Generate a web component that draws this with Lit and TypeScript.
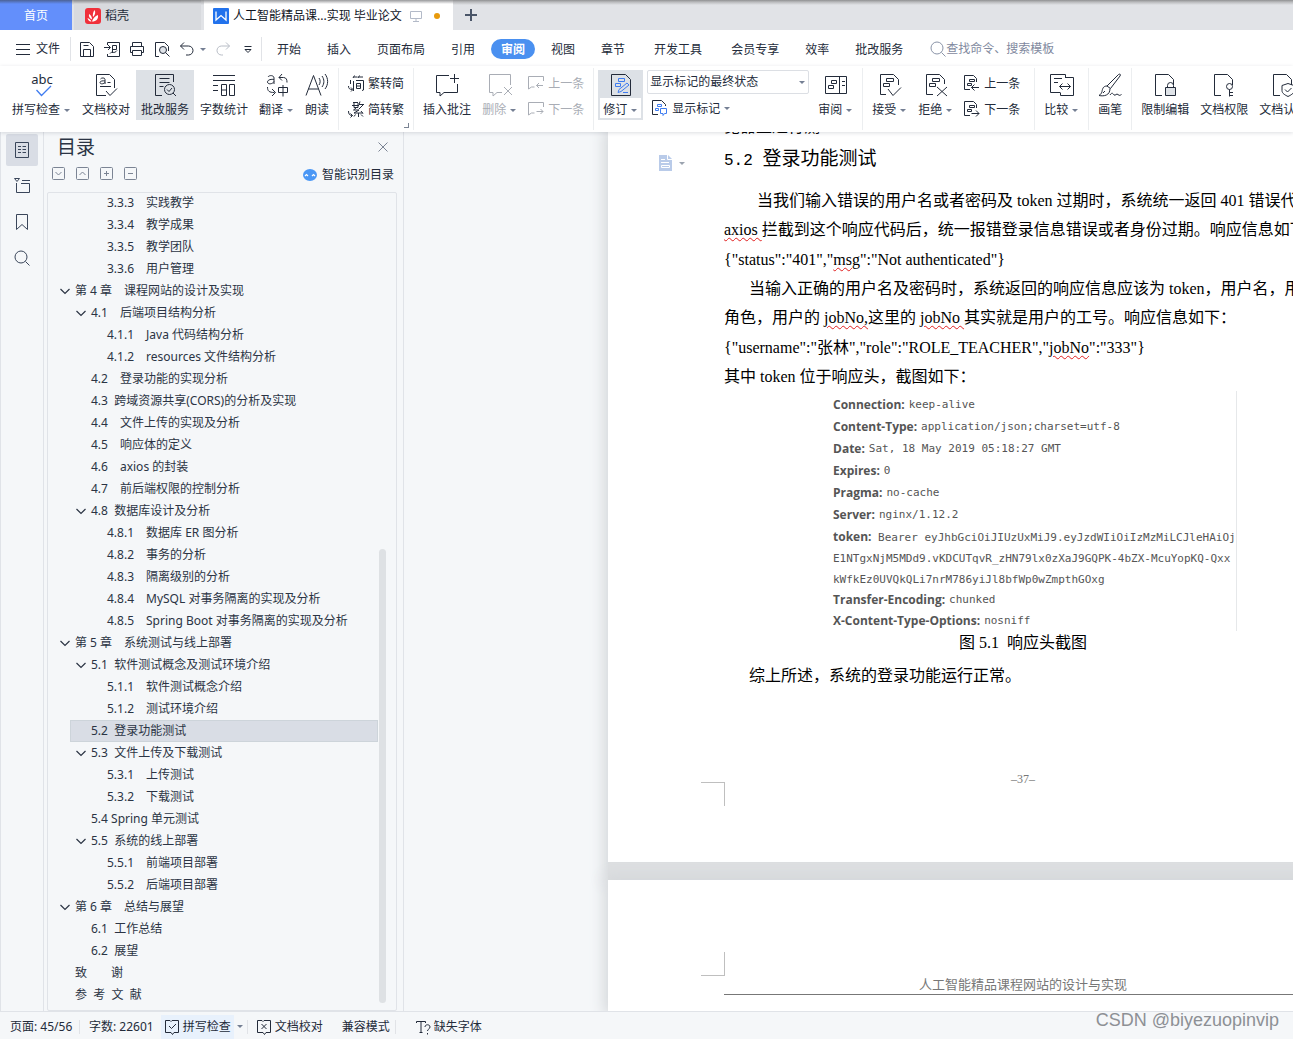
import { LitElement, html, svg, css, nothing, TemplateResult } from "lit";
import { customElement, property, state } from "lit/decorators.js";
import { classMap } from "lit/directives/class-map.js";

const doc = svg`<path d="M9 22.5H2.5v-21h13l5 5V12"/>`;
const lines2 = svg`<path d="M8.5 5.5h7v3h-7zM5.5 10.5h6v3h-6z"/>`;
const mini = svg`<path d="M5.5 4.5h5v2h-5zM3.5 8.5h4v2h-4z"/>`;

const ICONS: Record<string, TemplateResult> = {
  spell: svg`<text x="12" y="11" text-anchor="middle">abc</text><path class="blue" d="M6.500 17l5 5.500 9.500-9.500" stroke-width="1.300"/>`,
  proof: svg`<path d="M12 22.500H2.500v-21h13l5 5V15"/><path d="M6.500 6c1-1.500 4.500-1.500 4.500.500V11M11 8c-2-.500-5 0-5 1.500 0 2 4 1.600 5-.200M13.500 9.500h3M6 13.500h11M12 18l4 4.500 7-7"/>`,
  service: svg`<path d="M9 22.500H2.500v-21h18V9M6.500 5.500h10M6.500 9.500h10M6.500 13.500h4"/><circle cx="16.500" cy="16.500" r="5"/><path d="M14 16.500l2 2 3-3.500M20 20l3 3"/>`,
  count: svg`<path d="M1 2.500h22M1 7.500h22M1 12.500h5M1 17.500h5M9.500 11.500h5v11h-5zM9.500 17h5M17.500 11.500h5v11h-5z"/>`,
  translate: svg`<path d="M3 4c1-2 6-2 6 1v6M9 6.500C7 6 2.500 6.500 2.500 9s5 2.500 6.500-.500M17 1l-3 3.500 3 3M14 4.500h4.500c3 0 3.500 2.500 3.500 5M2.500 14c0 4 1.500 5.500 7 5.500M7 16l3.500 3.500L7 23M13.500 14.500h9v5h-9zM18 12v11.500"/>`,
  read: svg`<path d="M1 22.500L8.500 2.500 16 22.500M3.500 16h10M14 5c1.500 2 1.500 5 0 7M17 3c2.500 3.500 2.500 7.500 0 11M20 1c3.500 4.500 3.500 10.500 0 15"/>`,
  comment: svg`<path d="M14 2.500H1.500v17H5v3.500l4-3.500h13.500V11M19.500 1v9M15 5.500h9"/>`,
  remove: svg`<path d="M22.500 12V1.500h-21v18H5v3.500l4-3.500h5M16 14l8 8M24 14l-8 8"/>`,
  revise: svg`<path d="M2.500 1.500h14l5 5v16h-19z"/><path class="blue" d="M9.500 5.500h6v3h-6zM6.500 10.500h5v3h-5zM9 19.500l1-3 8-6.500 2 2-8 6.500zM14 19.500h5"/>`,
  review: svg`<path d="M1.500 3.500h21v17h-21zM15.500 3.500v17M7.500 7.500h5v3h-5zM4.500 12.500h5v3h-5zM18 8.500h3M18 12.500h3"/>`,
  accept: svg`<path d="M8 21.500H2.500v-20h13l5 5V12"/>${lines2}<path d="M10 16l5 6.500 8-8"/>`,
  reject: svg`<path d="M9 21.500H2.500v-20h13l5 5V11"/>${lines2}<path d="M13 14l10 9M23 14l-10 9"/>`,
  compare: svg`<path d="M10 19.500H.500v-18h15V4.500M4 5.500h8M4 9.500h4M15 4.500h8.500v18h-13v-3M9.500 13.500h11M12.500 10.500l-3 3 3 3M17.500 10.500l3 3-3 3"/>`,
  pen: svg`<path d="M9 13L20.500 1.500c1.500-1 2.500 0 1.500 1.500L12.500 15.500zM9 13c-4 0-4.500 3-5 5.500-.500 2-1.500 3-3 4 5 1 11 0 11-7M7 18l-2 2M12 22c2-3 3-1.500 4 0 1.500 1 2.500-2 4-.500s2 .800 3.500 0"/>`,
  restrict: svg`${doc}<path fill="#dfe3e8" d="M12.500 14.500h10v8h-10z"/><path d="M14.500 14.500v-2a3 3 0 0 1 6 0v2"/>`,
  rights: svg`${doc}<circle cx="17.500" cy="13.500" r="3"/><path d="M17.500 16.500v7M17.500 19.500h3.500M17.500 22.500h3.500"/>`,
  certify: svg`${doc}<path d="M17 10.500l6 2v5c0 3-3 4.500-6 6-3-1.500-6-3-6-6v-5zM14 16.500l2.500 2.500 4-4"/>`,
  toSimple: svg`<path d="M5 3l1.500-2.500M10 3l1.500-2.500M5.500 2h4M10.500 2H15M2.500 5v4M.500 11c0 2.500 1 3.500 4 3.500M3 12.500l2 2-2 2M5.500 6v10M8 5.500h7.500V15l-1.500.500M8.500 8.500h4v5h-4zM8.500 11h4"/>`,
  toTrad: svg`<path d="M5 1.500h5M4 4.500h7M6 2v4.500h4V2M12 .500l-1 3h5M15 4l-4 4M8 7L5.500 9H11l-5 3h9M13 10l2 2.500M10.500 12v4M7.500 13.500L6 15.500M13 13.500l2 2M.500 10c0 3 1 4.500 4 4.500M2.500 12.500l2 2-2 2"/>`,
  prevC: svg`<path d="M15.500 6V1.500H.500V14l3-2h3M15 10.500H8.500M11 8l-2.500 2.500L11 13"/>`,
  nextC: svg`<path d="M15.500 6V1.500H.500V14l3-2h3M8.500 10.500H15M12.500 8l2.500 2.500-2.500 2.500"/>`,
  prevR: svg`<path d="M6 14.500H.500V.500h9l3 3V7"/>${mini}<path d="M15 12.500H7.500M10.500 9.500l-3 3 3 3"/>`,
  nextR: svg`<path d="M6 14.500H.500V.500h9l3 3V7"/>${mini}<path d="M7.500 12.500H15M12 9.500l3 3-3 3"/>`,
  marks: svg`<path d="M6 14.500H.500V.500h9l4 4V6"/><path class="blue" d="M5.500 4.500h4v2h-4zM3.500 8.500h3v2h-3zM8.500 8.500h6v5h-2l-1.500 2v-2h-2.500z"/>`,
  menu: svg`<path d="M1 3.500h14M1 8.500h14M1 13.500h14"/>`,
  save: svg`<path d="M1.500 1.500h9l4 4v10h-13zM4.500 15v-6.500h7V15M4.500 4.500h5"/>`,
  export: svg`<path d="M3.500 4V1.500h12v14h-12V13M0 6.500h6M4 4l2.500 2.500L4 9M8.500 12V4.500h4v4h-4M6 12.500c2-3 4 1 7-3"/>`,
  print: svg`<path d="M3.500 5V1.500h9V5M3.500 11.500h-2v-6h13v6h-2M3.500 9.500h9v5h-9z"/>`,
  preview: svg`<path d="M5 15.500H1.500v-14h9l4 4V10"/><circle cx="9" cy="9" r="3.500" fill="#dfe3e8"/><path d="M11.500 11.500l4 4"/>`,
  undo: svg`<path d="M5 1.500L1.500 5 5 8.500M1.500 5h8a4.500 4.500 0 0 1 0 9H7"/>`,
  redo: svg`<path d="M11 1.500L14.500 5 11 8.500M14.500 5h-8a4.500 4.500 0 0 0 0 9H8"/>`,
  more: svg`<path d="M4.500 5.500h7M5 8.500l3 3 3-3z"/>`,
  search: svg`<circle cx="7" cy="7" r="6"/><path d="M11.500 11.500l4 4"/>`,
  screen: svg`<path d="M2.500 3.500h11v7h-11zM8 10.500v3M5 13.500h6"/>`,
  plus: svg`<path d="M8 2v12M2 8h12" stroke-width="2"/>`,
  outline: svg`<path d="M1.500.500h13v15h-13zM4 4.500h3M8.500 4.500H12M4 7.500h3M8.500 7.500H12M4 10.500h3M8.500 10.500H12"/>`,
  chapters: svg`<path d="M.500 .500h5l-2.500 3zM8 2.500h8M2.500 5v9.500h13v-9H7"/>`,
  bookmark: svg`<path d="M2.500.500h11v15l-5.500-5-5.500 5z"/>`,
  close: svg`<path d="M3.500 3.500l9 9M12.500 3.500l-9 9"/>`,
  boxDown: svg`<rect x="1.500" y="1.500" width="12" height="12" rx="1"/><path d="M4.500 6l3 3 3-3"/>`,
  boxUp: svg`<rect x="1.500" y="1.500" width="12" height="12" rx="1"/><path d="M4.500 9l3-3 3 3"/>`,
  boxPlus: svg`<rect x="1.500" y="1.500" width="12" height="12" rx="1"/><path d="M5 7.500h5M7.500 5v5"/>`,
  boxMinus: svg`<rect x="1.500" y="1.500" width="12" height="12" rx="1"/><path d="M5 7.500h5"/>`,
  robot: svg`<g stroke="none"><ellipse cx="8" cy="8" rx="7" ry="6" fill="#4a97f5"/></g><path stroke="#fff" stroke-width="1.200" d="M3 9l1.500-1.500L6 9M10 9l1.500-1.500L13 9"/>`,
  chevron: svg`<path d="M3.500 6l4.500 4.500L12.500 6" stroke-width="1.200"/>`,
  spellBook: svg`<path d="M7 13.500H1.500v-12H6l1 1 1-1h6.500v12H10l-1.500 2-1.500-2M5 7l2.500 2.500L12 5"/>`,
  proofBook: svg`<path d="M7 13.500H1.500v-12H6l1 1 1-1h6.500v12H10l-1.500 2-1.500-2M5.500 5l5 5M10.500 5l-5 5"/>`,
  missing: svg`<path d="M1.500 4V2.500h9V4M6 2.500v11M4.500 13.500h3M10 8c0-3 5-3 5 0 0 2-2.500 2-2.500 4M12.500 14v1.500"/>`,
  daoke: svg`<rect x="0" y="0" width="16" height="16" rx="3" fill="#f0303a" stroke="none"/><path fill="#fff" stroke="none" d="M9.500 2c1.500 2.500.500 5-1.500 7C7.500 7 8 4 9.500 2zM4 6c2 1 3 3 3 5.500C4.500 10.500 3.500 8.500 4 6zM13 7c.500 4-1.500 6.500-6 6.500C8 10.500 10 8 13 7zM2.500 10c1.500.500 3 1.500 4 3.500-2 .300-3.500-1-4-3.500z"/>`,
  writer: svg`<rect x="0" y="0" width="16" height="16" rx="1" fill="#2272ec" stroke="none"/><path stroke="#fff" stroke-width="1.300" d="M3 3.500V12l5-4.500L13 12V3.500"/>`,
  pageMark: svg`<path fill="#b9cbe9" stroke="none" d="M1 0h9l4 4v12H1z"/><path stroke="#fff" d="M9.500 0v4.500H14M3 4.500h4M3 7.500h8M3.500 10.500h8v2h-8z"/>`,
};

@customElement("ui-icon")
export class UiIcon extends LitElement {
  @property() name = "";
  @property({ type: Number }) size = 16;
  static styles = css`
    :host { display: inline-flex; flex: none; }
    svg { display: block; fill: none; stroke: currentColor; stroke-width: 1; overflow: visible; }
    text { fill: currentColor; stroke: none; font: 13px "Noto Sans", sans-serif; }
    .blue { stroke: #3f7cf0; }
  `;
  render() {
    const box = this.size > 16 ? 24 : 16;
    return html`<svg width=${this.size} height=${this.size} viewBox="0 0 ${box} ${box}" aria-hidden="true">${ICONS[this.name]}</svg>`;
  }
}

interface Node { level: number; text: string; open?: boolean; }

const OUTLINE: Node[] = [
  { level: 3, text: "3.3.3　实践教学" },
  { level: 3, text: "3.3.4　教学成果" },
  { level: 3, text: "3.3.5　教学团队" },
  { level: 3, text: "3.3.6　用户管理" },
  { level: 1, text: "第 4 章　课程网站的设计及实现", open: true },
  { level: 2, text: "4.1　后端项目结构分析", open: true },
  { level: 3, text: "4.1.1　Java 代码结构分析" },
  { level: 3, text: "4.1.2　resources 文件结构分析" },
  { level: 2, text: "4.2　登录功能的实现分析" },
  { level: 2, text: "4.3  跨域资源共享(CORS)的分析及实现" },
  { level: 2, text: "4.4　文件上传的实现及分析" },
  { level: 2, text: "4.5　响应体的定义" },
  { level: 2, text: "4.6　axios 的封装" },
  { level: 2, text: "4.7　前后端权限的控制分析" },
  { level: 2, text: "4.8  数据库设计及分析", open: true },
  { level: 3, text: "4.8.1　数据库 ER 图分析" },
  { level: 3, text: "4.8.2　事务的分析" },
  { level: 3, text: "4.8.3　隔离级别的分析" },
  { level: 3, text: "4.8.4　MySQL 对事务隔离的实现及分析" },
  { level: 3, text: "4.8.5　Spring Boot 对事务隔离的实现及分析" },
  { level: 1, text: "第 5 章　系统测试与线上部署", open: true },
  { level: 2, text: "5.1  软件测试概念及测试环境介绍", open: true },
  { level: 3, text: "5.1.1　软件测试概念介绍" },
  { level: 3, text: "5.1.2　测试环境介绍" },
  { level: 2, text: "5.2  登录功能测试" },
  { level: 2, text: "5.3  文件上传及下载测试", open: true },
  { level: 3, text: "5.3.1　上传测试" },
  { level: 3, text: "5.3.2　下载测试" },
  { level: 2, text: "5.4 Spring 单元测试" },
  { level: 2, text: "5.5  系统的线上部署", open: true },
  { level: 3, text: "5.5.1　前端项目部署" },
  { level: 3, text: "5.5.2　后端项目部署" },
  { level: 1, text: "第 6 章　总结与展望", open: true },
  { level: 2, text: "6.1  工作总结" },
  { level: 2, text: "6.2  展望" },
  { level: 1, text: "致　　谢" },
  { level: 1, text: "参  考  文  献" },
];

@customElement("outline-panel")
export class OutlinePanel extends LitElement {
  @state() private selected = 24;
  static styles = css`
    :host { display: flex; flex-direction: column; min-height: 0; padding: 0 6px 0 3px; border-right: 1px solid #e0e3e8; color: #2b3444; }
    * { box-sizing: border-box; }
    button { font: inherit; color: inherit; background: none; border: 0; padding: 0; margin: 0; text-align: left; }
    .title { display: flex; justify-content: space-between; align-items: center; height: 30px; padding: 0 6px 0 10px; }
    h2 { margin: 0; font-size: 19px; font-weight: 400; line-height: 30px; }
    .close { display: flex; color: #7b8494; }
    .tools { display: flex; align-items: center; height: 24px; gap: 8px; padding: 0 3px 0 4px; color: #7b8494; }
    .tools button { display: flex; }
    .tools .smart { margin-left: auto; align-items: center; gap: 4px; padding-top: 1px; color: #232b3a; line-height: 16px; }
    .box { display: flex; flex: 1; min-height: 0; margin-top: 6px; border: 1px solid #e0e3e8; border-radius: 2px; overflow: hidden; }
    .tree { flex: 1; min-width: 0; margin: -1px 0 0; padding: 0; list-style: none; }
    .row { display: flex; align-items: center; width: 100%; height: 22px; line-height: 20px; white-space: pre; border: 1px solid transparent; }
    li { height: 22px; padding-left: 10px; }
    li.l2, li.l3 { padding-left: 22px; }
    li.l3 .row { padding-left: 36px; }
    li.l2 .row { padding-left: 20px; }
    li.l1 .row { padding-left: 16px; }
    li.open .row { padding-left: 0; }
    li.l2.open .row { padding-left: 4px; }
    .row ui-icon { width: 16px; justify-content: center; }
    li.open { padding-left: 8px; }
    li.l2.open { padding-left: 20px; }
    li.open .row { gap: 2px; }
    .row.on { background: #d9dde5; border-color: #cdd4da; }
    .track { flex: none; display: flex; flex-direction: column; justify-content: flex-end; width: 18px; padding: 0 10px 7px 1px; }
    .thumb { height: 56%; border-radius: 4px; background: #dee1e4; }
  `;
  render() {
    return html`
      <div class="title"><h2>目录</h2><button class="close" aria-label="关闭"><ui-icon name="close"></ui-icon></button></div>
      <div class="tools">
        <button aria-label="展开"><ui-icon name="boxDown"></ui-icon></button>
        <button aria-label="收起"><ui-icon name="boxUp"></ui-icon></button>
        <button aria-label="增加级别"><ui-icon name="boxPlus"></ui-icon></button>
        <button aria-label="减少级别"><ui-icon name="boxMinus"></ui-icon></button>
        <button class="smart"><ui-icon name="robot"></ui-icon>智能识别目录</button>
      </div>
      <div class="box">
        <ul class="tree">
          ${OUTLINE.map((n, i) => html`<li class=${classMap({ ["l" + n.level]: true, open: !!n.open })}>
            <button class=${classMap({ row: true, on: i === this.selected })} @click=${() => (this.selected = i)}>${n.open ? html`<ui-icon name="chevron"></ui-icon>` : nothing}${n.text}</button>
          </li>`)}
        </ul>
        <div class="track"><div class="thumb"></div></div>
      </div>`;
  }
}

@customElement("document-view")
export class DocumentView extends LitElement {
  static styles = css`
    :host { display: flex; flex-direction: column; min-width: 0; min-height: 0; padding-left: 204px; overflow: hidden; color: #000; font: 16px/29px "Liberation Serif", "Noto Sans CJK SC", serif; background: #f5f7f9; }
    * { box-sizing: border-box; }
    .page { flex: none; display: grid; grid-template-columns: 116px 598px 116px; width: max-content; background: #fff; box-shadow: 0 0 14px 4px #d4d7da; border-bottom: 18px solid #dddfe1; }
    .page.next { flex: 1; align-content: start; border-bottom: 0; }
    .mark { justify-self: end; display: flex; align-items: center; align-self: start; gap: 5px; margin: 23px 39px 0 0; }
    .caret { width: 0; border: 3px solid transparent; border-top-color: #9ba3af; border-bottom: 0; }
    .text { white-space: nowrap; }
    p, h3, figure, figcaption, dl, dt, dd { margin: 0; }
    .cut { display: flex; align-items: flex-end; height: 9px; }
    h3 { font: 400 19px/38px "Liberation Mono", "Noto Sans CJK SC", monospace; padding-bottom: 6px; }
    h3 span { font-size: 16px; }
    .in { padding-left: 25px; }
    .first { padding-left: 33px; }
    .hang { display: block; }
    .two { margin-bottom: 1px; }
    u { text-decoration: underline wavy #e02020 1px; text-underline-offset: 2px; }
    .shot { width: 428px; margin: 0 auto; padding: 3px 0 0 24px; border-right: 1px solid #e6e8ea; color: #555; font: 11px/22px "DejaVu Sans Mono", monospace; }
    .shot div { display: flex; gap: 4px; height: 22px; }
    dt { font: 700 12px/22px "Open Sans", sans-serif; }
    .shot .token { display: block; height: 63px; line-height: 21px; }
    .token dt, .token dd { display: inline; line-height: 21px; }
    .shot .token ~ div { height: 21px; }
    figcaption { text-align: center; line-height: 24px; }
    .end { line-height: 42px; }
    .corner { justify-self: end; width: 24px; height: 24px; margin-right: -1px; border: solid #bfbfbf; border-width: 1px 1px 0 0; }
    .foot { margin-top: 85px; margin-bottom: 56px; }
    .num { margin-top: 73px; text-align: center; font-size: 12px; line-height: 18px; color: #777; }
    .head { margin-top: 72px; border-width: 0 1px 1px 0; }
    .running { grid-column: 2 / 4; display: grid; grid-template-columns: 598px 1fr; margin-top: 96px; border-bottom: 1px solid #777; text-align: center; font-size: 13px; line-height: 18px; color: #777; }
  `;
  render() {
    const rows = (list: string[][]) => list.map(([k, v]) => html`<div><dt>${k}:</dt><dd>${v}</dd></div>`);
    return html`
      <article class="page">
        <div class="mark"><ui-icon name="pageMark"></ui-icon><span class="caret"></span></div>
        <div class="text">
          <p class="cut">览器上进行测</p>
          <h3><span>5.2 </span>登录功能测试</h3>
          <p class="two"><span class="hang first">当我们输入错误的用户名或者密码及 token 过期时，系统统一返回 401 错误代码，</span><span class="hang"><u>axios </u>拦截到这个响应代码后，统一报错登录信息错误或者身份过期。响应信息如下：</span></p>
          <p>{"status":"401","<u>msg</u>":"Not authenticated"}</p>
          <p class="two"><span class="hang in">当输入正确的用户名及密码时，系统返回的响应信息应该为 token，用户名，用户</span><span class="hang">角色，用户的 <u>jobNo,</u>这里的 <u>jobNo </u>其实就是用户的工号。响应信息如下：</span></p>
          <p>{"username":"张林","role":"ROLE_TEACHER","<u>jobNo</u>":"333"}</p>
          <p>其中 token 位于响应头，截图如下：</p>
          <figure>
            <dl class="shot">
              ${rows([["Connection", "keep-alive"], ["Content-Type", "application/json;charset=utf-8"], ["Date", "Sat, 18 May 2019 05:18:27 GMT"], ["Expires", "0"], ["Pragma", "no-cache"], ["Server", "nginx/1.12.2"]])}
              <div class="token"><dt>token:</dt> <dd>Bearer eyJhbGciOiJIUzUxMiJ9.eyJzdWIiOiIzMzMiLCJleHAiOj<br>E1NTgxNjM5MDd9.vKDCUTqvR_zHN79lx0zXaJ9GQPK-4bZX-McuYopKQ-Qxx<br>kWfkEz0UVQkQLi7nrM786yiJl8bfWp0wZmpthGOxg</dd></div>
              ${rows([["Transfer-Encoding", "chunked"], ["X-Content-Type-Options", "nosniff"]])}
            </dl>
            <figcaption>图 5.1&nbsp; 响应头截图</figcaption>
          </figure>
          <p class="in end">综上所述，系统的登录功能运行正常。</p>
        </div>
        <div></div>
        <div class="corner foot"></div>
        <div class="num">–37–</div>
      </article>
      <article class="page next">
        <div class="corner head"></div>
        <div class="running"><span>人工智能精品课程网站的设计与实现</span></div>
      </article>`;
  }
}

@customElement("app-root")
export class AppRoot extends LitElement {
  static styles = css`
    :host { display: grid; grid-template-rows: 30px 36px 66px minmax(0, 1fr) 28px; height: 100vh; overflow: hidden; position: relative; background: #f5f7f9; color: #232b3a; font: 12px/16px "Noto Sans", "Noto Sans CJK SC", sans-serif; white-space: nowrap; }
    * { box-sizing: border-box; }
    button, select, input { font: inherit; color: inherit; background: none; border: 0; padding: 0; margin: 0; }
    .caret { flex: none; width: 0; border: 3px solid transparent; border-top-color: #747f93; border-bottom: 0; }

    .tabs { display: flex; background: linear-gradient(#8f9092, #b9babc 2px, #e1e3e7 5px, #e1e3e7); min-width: 0; }
    .tab { display: flex; align-items: center; gap: 5px; padding-top: 2px; }
    .home { justify-content: center; width: 72px; background: linear-gradient(#4c6295, #638ffb 4px); color: #fff; }
    .shop { width: 127px; margin: 0 3px 0 2px; padding-left: 11px; background: linear-gradient(#88898b, #d8dade 4px); gap: 4px; }
    .file { width: 249px; padding-left: 9px; gap: 4px; background: linear-gradient(#98999b, #fff 4px); color: #10151f; }
    .file .screen { display: flex; margin-left: 2px; color: #b3bac8; }
    .dot { width: 6px; height: 6px; margin-left: 6px; border-radius: 50%; background: #e89a0c; }
    .add { display: flex; margin-left: 10px; align-items: center; color: #4a5568; }

    .menu, .ribbon, .groups, .quick, nav { display: flex; align-items: center; }
    .menu, .ribbon { background: #fff; min-width: 0; overflow: hidden; }
    .menu { padding: 2px 0 0 15px; }
    .filebtn { display: flex; align-items: center; gap: 5px; width: 55px; }
    .bar { flex: none; width: 1px; height: 24px; background: #e1e3e7; }
    .quick { gap: 9px; padding: 0 5px 0 8px; }
    .quick button { display: flex; align-items: center; gap: 5px; }
    .quick .off { color: #b8bdc6; }
    .groups { gap: 9px; padding-left: 5px; }
    nav { gap: 6px; }
    nav button { height: 20px; padding: 1px 10px 0; }
    nav .on { background: #4a90f0; color: #fff; border-radius: 10px; font-weight: 700; }
    .find { display: flex; align-items: center; margin-left: 17px; color: #8a94a8; }
    .find input { width: 120px; outline: 0; }
    .find input::placeholder { color: #7f899e; opacity: 1; }

    .ribbon { align-items: flex-start; gap: 1px; padding: 4px 0 0 7px; z-index: 2; box-shadow: 0 1px 4px rgba(40, 50, 70, 0.16); }
    .big { flex: none; display: flex; flex-direction: column; align-items: center; gap: 4px; height: 50px; padding: 3px 5px; }
    .label { display: flex; align-items: center; padding-top: 1px; }
    .label .caret { margin: 0 1px 0 4px; }
    .big.on { background: #dde1e6; }
    .split { background: linear-gradient(#dde1e6 28px, #fff 28px); box-shadow: inset 0 0 0 2px #dde1e6; }
    .off { color: #a9adb5; }
    .sep { flex: none; width: 1px; height: 62px; margin: -2px 3px 0; background: #eceef0; }
    .stack { flex: none; display: flex; flex-direction: column; gap: 2px; padding-top: 1px; }
    .stack.wide { padding: 0 3px; }
    .stack.edge { padding-right: 5px; }
    .stack button { display: flex; align-items: center; gap: 4px; height: 24px; padding: 0 5px; }
    .field { position: relative; display: flex; align-items: center; justify-content: flex-end; }
    .field .caret { position: absolute; right: 4px; pointer-events: none; }
    select { width: 162px; height: 24px; padding: 0 2px; border: 1px solid #dcdfe4; border-radius: 2px; appearance: none; }
    .corner { align-self: flex-end; flex: none; width: 5px; height: 5px; margin: 0 0 4px -6px; border: solid #7b8494; border-width: 0 1px 1px 0; }

    .body { display: grid; grid-template-columns: 44px 360px minmax(0, 1fr); min-height: 0; }
    .rail { display: flex; flex-direction: column; align-items: center; gap: 4px; padding-top: 2px; border: solid #e0e3e8; border-width: 0 1px; color: #3a465a; }
    .rail button { display: flex; align-items: center; justify-content: center; width: 32px; height: 32px; border-radius: 2px; }
    .rail .on { background: #d9dde5; }

    .status { display: flex; align-items: center; border-top: 1px solid #e0e3e8; padding: 2px 0 0 10px; background: #f5f7f9; z-index: 1; }
    .status button { display: flex; align-items: center; gap: 3px; height: 24px; }
    .status .bar { height: 14px; }
    .status .pages { width: 69px; }
    .status .words { padding: 0 7px 0 9px; }
    .status .spell { padding: 0 3px; background: #e8f1fc; }
    .status .spell + .caret { margin: 0 4px 0 3px; }
    .status .proof { padding: 0 19px 0 8px; }
    .status .compat { padding-right: 5px; }
    .status .missing { padding-left: 19px; }
    .watermark { position: absolute; right: 14px; bottom: 8px; z-index: 3; font: 18px/22px "Liberation Sans", sans-serif; color: #8d9095; }
  `;

  private big(icon: string, label: string, opt: { caret?: boolean; cls?: string } = {}) {
    return html`<button class="big ${opt.cls ?? ""}"><ui-icon name=${icon} size="24"></ui-icon><span class="label">${label}${opt.caret ? html`<span class="caret"></span>` : nothing}</span></button>`;
  }
  private small(icon: string, label: string, cls = "") {
    return html`<button class=${cls}><ui-icon name=${icon}></ui-icon><span class="label">${label}</span></button>`;
  }
  private tabs(list: string[]) {
    return html`<nav>${list.map((t) => html`<button class=${t === "审阅" ? "on" : ""}>${t}</button>`)}</nav>`;
  }

  render() {
    const sep = html`<span class="sep"></span>`;
    const caret = { caret: true };
    return html`
      <header class="tabs">
        <button class="tab home">首页</button>
        <button class="tab shop"><ui-icon name="daoke"></ui-icon>稻壳</button>
        <button class="tab file"><ui-icon name="writer"></ui-icon>人工智能精品课...实现 毕业论文<span class="screen"><ui-icon name="screen"></ui-icon></span><span class="dot"></span></button>
        <button class="add" aria-label="新建"><ui-icon name="plus"></ui-icon></button>
      </header>
      <div class="menu">
        <button class="filebtn"><ui-icon name="menu"></ui-icon>文件</button>
        <span class="bar"></span>
        <div class="quick">
          <button aria-label="保存"><ui-icon name="save"></ui-icon></button>
          <button aria-label="输出"><ui-icon name="export"></ui-icon></button>
          <button aria-label="打印"><ui-icon name="print"></ui-icon></button>
          <button aria-label="打印预览"><ui-icon name="preview"></ui-icon></button>
          <button aria-label="撤销"><ui-icon name="undo"></ui-icon><span class="caret"></span></button>
          <button class="off" aria-label="恢复"><ui-icon name="redo"></ui-icon></button>
          <button aria-label="更多"><ui-icon name="more"></ui-icon></button>
        </div>
        <span class="bar"></span>
        <div class="groups">
          ${this.tabs(["开始", "插入", "页面布局", "引用", "审阅", "视图", "章节"])}
          ${this.tabs(["开发工具"])}
          ${this.tabs(["会员专享", "效率", "批改服务"])}
        </div>
        <label class="find"><ui-icon name="search"></ui-icon><input type="text" aria-label="查找" placeholder="查找命令、搜索模板"></label>
      </div>
      <div class="ribbon">
        ${this.big("spell", "拼写检查", caret)}
        ${this.big("proof", "文档校对")}
        ${this.big("service", "批改服务", { cls: "on" })}
        ${this.big("count", "字数统计")}
        ${this.big("translate", "翻译", caret)}
        ${this.big("read", "朗读")}
        ${sep}
        <div class="stack">${this.small("toSimple", "繁转简")}${this.small("toTrad", "简转繁")}</div>
        <span class="corner"></span>
        ${sep}
        ${this.big("comment", "插入批注")}
        ${this.big("remove", "删除", { caret: true, cls: "off" })}
        <div class="stack">${this.small("prevC", "上一条", "off")}${this.small("nextC", "下一条", "off")}</div>
        ${sep}
        ${this.big("revise", "修订", { caret: true, cls: "split" })}
        <div class="stack wide">
          <span class="field"><select aria-label="显示标记状态"><option>显示标记的最终状态</option></select><span class="caret"></span></span>
          <button><ui-icon name="marks"></ui-icon><span class="label">显示标记<span class="caret"></span></span></button>
        </div>
        ${this.big("review", "审阅", caret)}
        ${sep}
        ${this.big("accept", "接受", caret)}
        ${this.big("reject", "拒绝", caret)}
        <div class="stack edge">${this.small("prevR", "上一条")}${this.small("nextR", "下一条")}</div>
        ${sep}
        ${this.big("compare", "比较", caret)}
        ${sep}
        ${this.big("pen", "画笔")}
        ${sep}
        ${this.big("restrict", "限制编辑")}
        ${this.big("rights", "文档权限")}
        ${this.big("certify", "文档认证")}
      </div>
      <div class="body">
        <div class="rail">
          <button class="on" aria-label="目录"><ui-icon name="outline"></ui-icon></button>
          <button aria-label="章节"><ui-icon name="chapters"></ui-icon></button>
          <button aria-label="书签"><ui-icon name="bookmark"></ui-icon></button>
          <button aria-label="查找"><ui-icon name="search"></ui-icon></button>
        </div>
        <outline-panel></outline-panel>
        <document-view></document-view>
      </div>
      <footer class="status">
        <span class="pages">页面: 45/56</span><span class="bar"></span>
        <span class="words">字数: 22601</span>
        <button class="spell"><ui-icon name="spellBook"></ui-icon>拼写检查</button><span class="caret"></span><span class="bar"></span>
        <button class="proof"><ui-icon name="proofBook"></ui-icon>文档校对</button>
        <span class="compat">兼容模式</span><span class="bar"></span>
        <button class="missing"><ui-icon name="missing"></ui-icon>缺失字体</button>
      </footer>
      <div class="watermark">CSDN @biyezuopinvip</div>`;
  }
}
